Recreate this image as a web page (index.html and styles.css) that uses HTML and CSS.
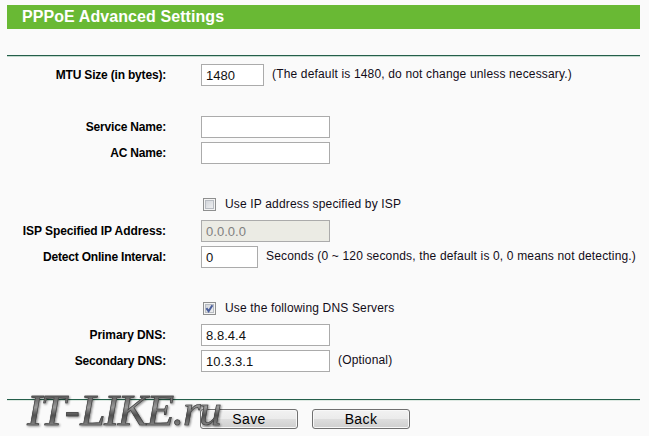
FILE: index.html
```html
<!DOCTYPE html>
<html lang="en">
<head>
    <meta charset="UTF-8">
    <title>PPPoE Advanced Settings</title>
    <link rel="stylesheet" href="styles.css">
</head>
<body>
    <form class="panel">
        <h1 class="title">PPPoE Advanced Settings</h1>
        <div class="fields">
            <div class="row">
                <label class="label" for="mtu">MTU Size (in bytes):</label>
                <input class="text size-mtu" id="mtu" type="text" value="1480">
                <span class="note">(The default is 1480, do not change unless necessary.)</span>
            </div>
            <div class="row space">
                <label class="label" for="service">Service Name:</label>
                <input class="text" id="service" type="text">
            </div>
            <div class="row">
                <label class="label" for="ac">AC Name:</label>
                <input class="text" id="ac" type="text">
            </div>
            <div class="row space">
                <span class="label"></span>
                <span class="check"></span>
                <span class="note">Use IP address specified by ISP</span>
            </div>
            <div class="row">
                <label class="label label-wide" for="ip">ISP Specified IP Address:</label>
                <input class="text" id="ip" type="text" value="0.0.0.0" disabled>
            </div>
            <div class="row">
                <label class="label" for="detect">Detect Online Interval:</label>
                <input class="text size-detect" id="detect" type="text" value="0">
                <span class="note">Seconds (0 ~ 120 seconds, the default is 0, 0 means not detecting.)</span>
            </div>
            <div class="row space">
                <span class="label"></span>
                <span class="check">
                    <svg width="13" height="13" viewBox="0 0 13 13"><path d="M3.4 6.2 L5.6 9.2 L9.4 3.2" fill="none" stroke="#4b5f9b" stroke-width="2"/></svg>
                </span>
                <span class="note">Use the following DNS Servers</span>
            </div>
            <div class="row">
                <label class="label label-wide" for="dns1">Primary DNS:</label>
                <input class="text" id="dns1" type="text" value="8.8.4.4">
            </div>
            <div class="row">
                <label class="label" for="dns2">Secondary DNS:</label>
                <input class="text" id="dns2" type="text" value="10.3.3.1">
                <span class="note">(Optional)</span>
            </div>
        </div>
        <div class="buttons">
            <button class="btn" type="button">Save</button>
            <button class="btn" type="button">Back</button>
        </div>
    </form>
    <div class="watermark">IT<span class="dash">-</span>LIKE.ru</div>
</body>
</html>
```
FILE: styles.css
```css
body {
    margin: 0;
    height: 436px;
    overflow: hidden;
    background-color: #fafafa;
    font-family: Arial, "Liberation Sans", sans-serif;
    font-size: 12px;
    color: #000;
}
.panel {
    width: 633px;
    padding: 5px 0 0 7px;
}
.title {
    margin: 0 0 26px;
    height: 24px;
    padding-left: 15px;
    background-color: #69b934;
    color: #fff;
    font-size: 16px;
    line-height: 23px;
    letter-spacing: 0.08px;
}
.fields {
    height: 337px;
    padding-top: 6px;
    border-top: 1px solid #245e4a;
    border-bottom: 1px solid #245e4a;
    box-shadow: inset 0 1px #c4dace, 0 1px #dde9e2;
}
.row {
    display: flex;
    align-items: center;
    height: 26px;
    white-space: nowrap;
}
.space {
    margin-top: 26px;
}
.label {
    width: 159px;
    margin: -1px 35px 0 0;
    text-align: right;
    font-weight: bold;
    letter-spacing: -0.19px;
}
.label-wide {
    letter-spacing: -0.08px;
}
.text {
    box-sizing: border-box;
    width: 129px;
    height: 22px;
    margin: 0;
    padding: 1px 4px 0;
    border: 1px solid #ababab;
    border-radius: 0;
    background-color: #fff;
    color: #111;
    font-family: Arial, "Liberation Sans", sans-serif;
    font-size: 13px;
    letter-spacing: 0.02px;
}
.text:disabled {
    background-color: #ebebe4;
    color: #808080;
}
.size-mtu {
    width: 63px;
}
.size-detect {
    width: 57px;
}
.note {
    margin: -2px 0 0 8px;
    color: #120c18;
    letter-spacing: 0.16px;
}
.check {
    box-sizing: border-box;
    width: 13px;
    height: 13px;
    margin: -1px 1px 0 2px;
    border: 1px solid #8e8f8f;
    background: linear-gradient(135deg, #cbcfd5, #f6f6f6);
    box-shadow: inset 0 0 0 1px #f4f4f4, inset 0 0 0 2px #b8bcc2;
}
.check svg {
    display: block;
    margin: -1px;
}
.buttons {
    display: flex;
    gap: 14px;
    padding: 9px 0 0 193px;
}
.btn {
    box-sizing: border-box;
    width: 98px;
    height: 20px;
    padding: 0;
    border: 1px solid #707070;
    border-radius: 3px;
    background: linear-gradient(#f2f2f2 0%, #ebebeb 48%, #dddddd 52%, #cfcfcf 100%);
    box-shadow: inset 0 0 0 1px #f8f8f8;
    color: #000;
    font-family: Arial, "Liberation Sans", sans-serif;
    font-size: 14px;
    line-height: 18px;
    letter-spacing: 0.4px;
}
/* site mark laid over the form */
.watermark {
    position: absolute;
    left: 27px;
    top: 384px;
    padding-right: 6px;
    font: italic 45px/52px "Liberation Serif", serif;
    letter-spacing: -1.2px;
    color: transparent;
    background: linear-gradient(#5c5c5c 22%, #9a9a9a 45%, #505050 60%, #858585 80%);
    background-clip: text;
    -webkit-background-clip: text;
    -webkit-text-stroke: 0.7px #444;
    filter: drop-shadow(1px 1px 1px rgba(0, 0, 0, 0.45));
}
.dash {
    letter-spacing: 0.5px;
}
```
